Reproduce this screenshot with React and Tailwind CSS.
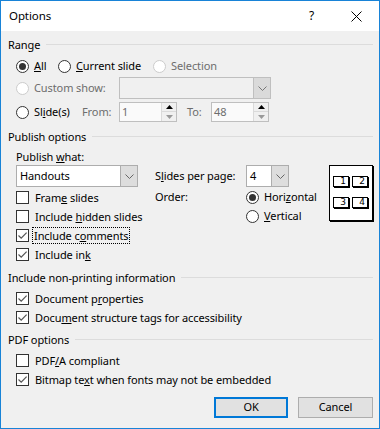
import React from "react"

const font = { fontFamily: '"Noto Sans", "Segoe UI", sans-serif' }

function Radio({ checked, disabled }) {
  return (
    <span
      className={`w-[13px] h-[13px] rounded-full border flex items-center justify-center shrink-0 bg-white ${
        disabled ? "border-[#cccccc]" : "border-[#333333]"
      }`}
    >
      {checked && <span className="w-[7px] h-[7px] rounded-full bg-[#333333]" />}
    </span>
  )
}

function Check({ checked }) {
  return (
    <span className="w-[13px] h-[13px] border border-[#333333] bg-white flex items-center justify-center shrink-0">
      {checked && (
        <svg width="11" height="11" viewBox="0 0 11 11">
          <path d="M1.5 5.5 L4.2 8.2 L9.6 2.6" fill="none" stroke="#555" strokeWidth="1.2" />
        </svg>
      )}
    </span>
  )
}

function Chevron({ color = "#666" }) {
  return (
    <svg width="9" height="5" viewBox="0 0 9 5">
      <path d="M0.5 0.5 L4.5 4.5 L8.5 0.5" fill="none" stroke={color} strokeWidth="1" />
    </svg>
  )
}

function GroupHead({ children, className = "" }) {
  return (
    <div className={`flex items-center h-[16px] pl-[7px] pr-[6px] ${className}`}>
      <span className="text-black whitespace-nowrap">{children}</span>
      <span className="flex-1 h-px bg-[#dcdcdc] ml-[6px] mt-[-1px]" />
    </div>
  )
}

function CheckRow({ checked, focus, children }) {
  return (
    <div className="flex items-center h-[19px]">
      <Check checked={checked} />
      <span
        className={`ml-[4px] px-[1px] leading-[15px] whitespace-nowrap ${
          focus ? "outline outline-1 outline-dotted outline-black" : "border border-transparent"
        }`}
      >
        {children}
      </span>
    </div>
  )
}

function Spin({ value }) {
  return (
    <div className="w-[58px] h-[20px] border border-[#bfbfbf] bg-[#fafafa] flex shrink-0">
      <span className="flex-1 pl-[2px] leading-[18px] text-[#6d6d6d]">{value}</span>
      <div className="w-[15px] flex flex-col border-l border-[#dadada]">
        <div className="h-[9px] border-b border-[#dadada] bg-[#f0f0f0] flex items-center justify-center">
          <svg width="7" height="4" viewBox="0 0 7 4"><path d="M0 4 L3.5 0 L7 4Z" fill="#000" /></svg>
        </div>
        <div className="flex-1 bg-[#f0f0f0] flex items-center justify-center">
          <svg width="7" height="4" viewBox="0 0 7 4"><path d="M0 0 L3.5 4 L7 0Z" fill="#9a9a9a" /></svg>
        </div>
      </div>
    </div>
  )
}

function MiniBox({ n }) {
  return (
    <span
      className="w-[16px] h-[11px] border border-black text-[9px] leading-[9px] text-right pr-[2px] shadow-[1px_1px_0_0_#000]"
      style={{ fontFamily: '"DejaVu Sans", sans-serif', letterSpacing: 0 }}
    >
      {n}
    </span>
  )
}

export default function App() {
  return (
    <div
      className="w-[380px] h-[429px] border border-[#1883d7] bg-[#f0f0f0] text-[11px] tracking-[-0.1px] text-black flex flex-col"
      style={font}
    >
      {/* title bar */}
      <div className="h-[30px] bg-white flex items-center pl-[8px] shrink-0">
        <span className="text-[11.5px]">Options</span>
        <span className="ml-auto mr-[37px] text-[12px]">?</span>
        <svg className="mr-[17px]" width="11" height="11" viewBox="0 0 11 11">
          <path d="M0.5 0.5 L10.5 10.5 M10.5 0.5 L0.5 10.5" stroke="#000" strokeWidth="1" />
        </svg>
      </div>

      {/* Range */}
      <GroupHead className="mt-[6px]">Range</GroupHead>
      <div className="pl-[15px] flex flex-col">
        <div className="flex items-center h-[19px] mt-[4px]">
          <div className="w-[42px] flex items-center">
            <Radio checked />
            <span className="ml-[5px]"><u>A</u>ll</span>
          </div>
          <div className="w-[95px] flex items-center">
            <Radio />
            <span className="ml-[5px]"><u>C</u>urrent slide</span>
          </div>
          <Radio disabled />
          <span className="ml-[5px] text-[#6d6d6d]">Selection</span>
        </div>
        <div className="flex items-center h-[22px] mt-[1px]">
          <Radio disabled />
          <span className="ml-[5px] text-[#6d6d6d] w-[85px]">Custom show:</span>
          <div className="w-[152px] h-[22px] border border-[#bfbfbf] bg-[#f0f0f0] flex justify-end">
            <div className="w-[17px] h-full border-l border-[#bfbfbf] bg-[#dadada] flex items-center justify-center">
              <Chevron color="#777" />
            </div>
          </div>
        </div>
        <div className="flex items-center h-[20px] mt-[3px]">
          <Radio />
          <span className="ml-[5px] w-[48px] whitespace-nowrap">Sl<u>i</u>de(s)</span>
          <span className="w-[37px] text-[#6d6d6d]">From:</span>
          <Spin value="1" />
          <span className="ml-[10px] w-[24px] text-[#6d6d6d]">To:</span>
          <Spin value="48" />
        </div>
      </div>

      {/* Publish options */}
      <GroupHead className="mt-[7px]">Publish options</GroupHead>
      <div className="pl-[15px] h-[16px] mt-[4px] flex items-center">
        <span>Publish <u>w</u>hat:</span>
      </div>
      <div className="flex pl-[15px]">
        <div className="w-[139px] flex flex-col">
          <div className="w-[122px] h-[22px] border border-[#adadad] bg-white flex">
            <span className="flex-1 pl-[3px] leading-[20px]">Handouts</span>
            <div className="w-[17px] h-full border-l border-[#adadad] bg-[#dddddd] flex items-center justify-center">
              <Chevron />
            </div>
          </div>
          <div className="mt-[1px] flex flex-col">
            <CheckRow>Fram<u>e</u> slides</CheckRow>
            <CheckRow>Include <u>h</u>idden slides</CheckRow>
            <CheckRow checked focus>Include c<u>o</u>mments</CheckRow>
            <CheckRow checked>Include in<u>k</u></CheckRow>
          </div>
        </div>
        <div className="w-[174px] flex flex-col">
          <div className="flex items-center h-[22px]">
            <span className="w-[91px]">S<u>l</u>ides per page:</span>
            <div className="w-[43px] h-[22px] border border-[#adadad] bg-white flex">
              <span className="flex-1 pl-[3px] leading-[20px]">4</span>
              <div className="w-[17px] h-full border-l border-[#adadad] bg-[#dddddd] flex items-center justify-center">
                <Chevron />
              </div>
            </div>
          </div>
          <div className="flex mt-[1px]">
            <div className="w-[91px] h-[19px] flex items-center">Order:</div>
            <div className="flex flex-col">
              <div className="flex items-center h-[19px]">
                <Radio checked />
                <span className="ml-[5px]">Hori<u>z</u>ontal</span>
              </div>
              <div className="flex items-center h-[19px]">
                <Radio />
                <span className="ml-[5px]"><u>V</u>ertical</span>
              </div>
            </div>
          </div>
        </div>
        <div className="w-[44px] h-[56px] border border-black bg-white shadow-[1px_1px_0_0_#000] flex flex-col gap-[10px] pt-[10px] pl-[3px]">
          <div className="flex gap-[3px]">
            <MiniBox n="1" />
            <MiniBox n="2" />
          </div>
          <div className="flex gap-[3px]">
            <MiniBox n="3" />
            <MiniBox n="4" />
          </div>
        </div>
      </div>

      {/* Non-printing */}
      <GroupHead className="mt-[6px]">Include non-printing information</GroupHead>
      <div className="pl-[15px] mt-[3px] flex flex-col">
        <CheckRow checked>Document p<u>r</u>operties</CheckRow>
        <CheckRow checked>Docu<u>m</u>ent structure tags for accessibility</CheckRow>
      </div>

      {/* PDF options */}
      <GroupHead className="mt-[5px]">PDF options</GroupHead>
      <div className="pl-[15px] mt-[3px] flex flex-col">
        <CheckRow>PDF<u>/</u>A compliant</CheckRow>
        <CheckRow checked>Bitmap te<u>x</u>t when fonts may not be embedded</CheckRow>
      </div>

      <div className="flex justify-end gap-[10px] pr-[6px] mt-[8px]">
        <button className="w-[74px] h-[21px] border-2 border-[#0078d7] bg-[#e1e1e1]">OK</button>
        <button className="w-[75px] h-[21px] border border-[#adadad] bg-[#e1e1e1]">Cancel</button>
      </div>
    </div>
  )
}
